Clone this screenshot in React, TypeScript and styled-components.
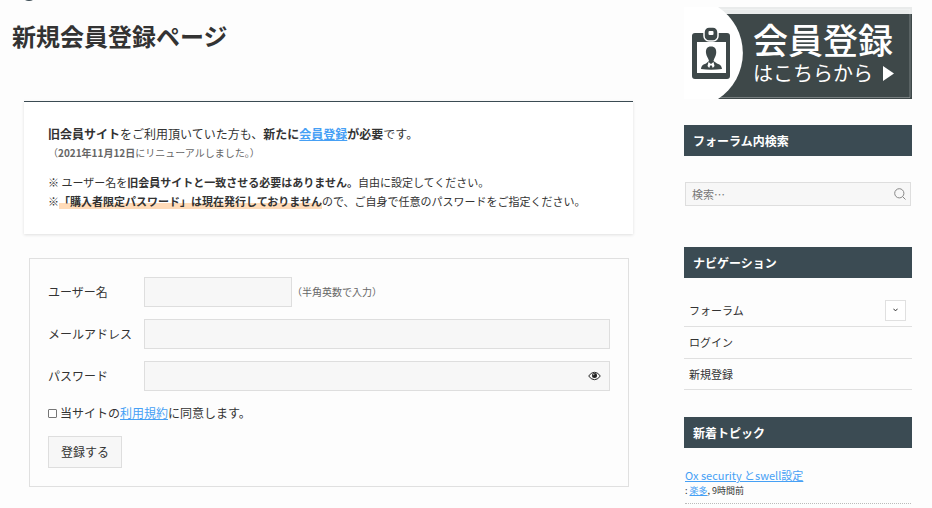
import React from "react";
import styled, { createGlobalStyle } from "styled-components";

const GlobalStyle = createGlobalStyle`
  *, *::before, *::after { box-sizing: border-box; }
  body {
    margin: 0;
    background: #fdfdfd;
    color: #333;
    font-family: "Noto Sans CJK JP", "Noto Sans", sans-serif;
    font-size: 12px;
    line-height: 20px;
  }
  a { color: #46a0f5; }
  button, input { font: inherit; color: inherit; }
`;

const Page = styled.div`
  display: flex;
  align-items: flex-start;
  gap: 39px;
  padding: 0 20px 0 12px;
`;

const Main = styled.main`
  flex: 1;
  min-width: 0;
`;

const HeaderMark = styled.svg`
  display: block;
  margin-left: 9px;
`;

const PageTitle = styled.h1`
  margin: 17px 0 0;
  font-size: 24px;
  line-height: 34px;
  font-weight: 700;
`;

const Notice = styled.section`
  margin: 48px 12px 0;
  padding: 22px 24px 23px;
  background: #fff;
  border-top: 1px solid #3b4b53;
  box-shadow: 0 1px 3px rgba(0, 0, 0, 0.12);
`;

const Lead = styled.p`
  margin: 0;
`;

const Renewal = styled.p`
  margin: 0 0 12px;
  font-size: 10px;
  line-height: 17px;
  color: #666;
`;

const Note = styled.p`
  margin: 0;
  font-size: 11px;
  line-height: 19px;
`;

const Marker = styled.strong`
  background: linear-gradient(transparent 64%, #ffdbb8 64%);
`;

const Form = styled.form`
  display: flex;
  flex-direction: column;
  gap: 12px;
  margin: 24px 16px 20px 17px;
  padding: 18px;
  border: 1px solid #e0e0e0;
`;

const Field = styled.div`
  display: grid;
  grid-template-columns: 96px 1fr;
  align-items: center;
`;

const Control = styled.div`
  position: relative;
  display: flex;
  align-items: center;
`;

const TextInput = styled.input<{ $short?: boolean }>`
  width: ${(p) => (p.$short ? "148px" : "100%")};
  height: 30px;
  padding: 0 8px;
  background: #f7f7f7;
  border: 1px solid #dedede;
  border-radius: 0;
`;

const Hint = styled.small`
  font-size: 10px;
  color: #666;
`;

const EyeButton = styled.button`
  position: absolute;
  right: 9px;
  display: flex;
  padding: 0;
  border: 0;
  background: none;
`;

const Agreement = styled.label`
  display: flex;
  align-items: center;
`;

const CheckBox = styled.input`
  appearance: none;
  width: 9px;
  height: 9px;
  margin: 0 3px 0 0;
  background: #fff;
  border: 1px solid #767676;
  border-radius: 1px;
  &:checked { background: #46a0f5; }
`;

const SubmitButton = styled.button`
  align-self: flex-start;
  margin-top: 1px;
  height: 32px;
  padding: 0 12px;
  background: #f7f7f7;
  border: 1px solid #dedede;
`;

const Sidebar = styled.aside`
  flex: 0 0 228px;
  padding-top: 7px;
`;

const BannerLink = styled.a`
  display: block;
  margin-bottom: 26px;
  svg { display: block; }
`;

const WidgetTitle = styled.h2`
  margin: 0;
  padding: 6px 9px 5px;
  background: #3b4b53;
  color: #fff;
  font-size: 12px;
  line-height: 20px;
  font-weight: 700;
`;

const SearchForm = styled.form`
  display: flex;
  margin: 26px 1px 41px;
  height: 24px;
  background: #f7f7f7;
  border: 1px solid #dedede;
`;

const SearchInput = styled.input`
  flex: 1;
  min-width: 0;
  padding: 0 6px;
  border: 0;
  background: none;
  font-size: 11px;
  &::placeholder { color: #777; }
`;

const SearchButton = styled.button`
  display: flex;
  align-items: center;
  padding: 0 4px;
  border: 0;
  background: none;
`;

const NavList = styled.ul`
  margin: 17px 0 27px;
  padding: 0;
  list-style: none;
`;

const NavItem = styled.li`
  display: flex;
  align-items: center;
  justify-content: space-between;
  height: 32px;
  padding: 0 6px 1px 5px;
  border-bottom: 1px solid #e0e0e0;
  font-size: 11px;
  &:last-child { height: 31px; }
`;

const NavLink = styled.a`
  color: #333;
  text-decoration: none;
`;

const ToggleButton = styled.button`
  display: flex;
  align-items: center;
  justify-content: center;
  width: 21px;
  height: 21px;
  padding: 0;
  background: #fff;
  border: 1px solid #e0e0e0;
`;

const TopicList = styled.ul`
  margin: 19px 1px 0;
  padding: 0;
  list-style: none;
`;

const Topic = styled.li`
  padding-bottom: 5px;
  border-bottom: 1px dotted #bbb;
  font-size: 11px;
  line-height: 16px;
`;

const TopicMeta = styled.div`
  font-size: 9px;
  line-height: 15px;
`;

const Banner = () => (
  <svg width="228" height="92" viewBox="0 0 228 92" role="img" aria-label="会員登録はこちらから">
    <defs>
      <clipPath id="banner-bounds">
        <rect width="228" height="92" />
      </clipPath>
    </defs>
    <g clipPath="url(#banner-bounds)">
      <rect y="7" width="228" height="85" fill="#fff" />
      <path d="M34 0H228V7H34Z" fill="#e9ebeb" />
      <path d="M34 7H228V92H34Z" fill="#3e4849" />
      <path d="M34 2.5H226V90.5H34" fill="none" stroke="#fff" strokeOpacity="0.3" />
      <path d="M0 0H34A55 55 0 0 1 34 92H0Z" fill="#fff" />
      <g fill="#3e4849">
        <path d="M11 26H43Q46 26 46 29V69Q46 72 43 72H11Q8 72 8 69V29Q8 26 11 26ZM13 35V66H42V35Z" fillRule="evenodd" />
        <rect x="20" y="20" width="14" height="14" rx="5" stroke="#fff" strokeWidth="1.500" />
        <rect x="24.500" y="24" width="5" height="4" rx="1" fill="#fff" />
        <path d="M27 39.500C31 39.500 32.500 42 32.200 46C32 49.500 30 51 29.500 54L33 56.500C36 57.500 37.500 58.500 38 62Q27 63.500 17 62C17.500 58.500 19 57.500 22 56.500L25 54C24.500 51 22.300 49.500 22 46C21.700 42 23 39.500 27 39.500Z" />
        <path d="M24.500 55L27 57L29.500 55L30.500 59L28.800 61L27.800 58.500H26.200L25.200 61L23.500 59Z" fill="#fff" />
      </g>
      <text x="69" y="47" fontSize="35" fontWeight="500" fill="#fff">会員登録</text>
      <text x="69" y="74" fontSize="20" fontWeight="400" fill="#fff">はこちらから</text>
      <path d="M199 59L210 66.500L199 74Z" fill="#fff" />
    </g>
  </svg>
);

const EyeIcon = () => (
  <svg width="13" height="10" viewBox="0 0 13 10">
    <path d="M.7 5Q3 1.300 6.500 1.300T12.300 5Q10 8.700 6.500 8.700T.7 5Z" fill="none" stroke="#222" />
    <circle cx="6.500" cy="4.500" r="2.500" fill="#222" />
    <path d="M5.200 4.300Q5.200 3.200 6.500 3.200" fill="none" stroke="#fff" strokeWidth=".7" />
  </svg>
);

const SearchIcon = () => (
  <svg width="12" height="12" viewBox="0 0 12 12" fill="none" stroke="#888">
    <circle cx="5.300" cy="5.300" r="4.600" />
    <path d="M8.600 8.600L11.500 11.500" />
  </svg>
);

const ChevronIcon = () => (
  <svg width="5" height="4" viewBox="0 0 5 4" fill="none" stroke="#333">
    <path d="M.4 .7L2.500 2.900L4.600 .7" />
  </svg>
);

export default function App() {
  return (
    <>
      <GlobalStyle />
      <Page>
        <Main>
          <HeaderMark width="16" height="2" viewBox="0 0 16 2" aria-hidden="true">
            <circle cx="8" cy="-7" r="8" fill="#3b4b53" />
          </HeaderMark>
          <PageTitle>新規会員登録ページ</PageTitle>
          <Notice>
            <Lead>
              <strong>旧会員サイト</strong>をご利用頂いていた方も、
              <strong>新たに<a href="#register">会員登録</a>が必要</strong>です。
            </Lead>
            <Renewal>（<strong>2021年11月12日</strong>にリニューアルしました。）</Renewal>
            <Note>
              ※ ユーザー名を<strong>旧会員サイトと一致させる必要はありません。</strong>自由に設定してください。
            </Note>
            <Note>
              ※<Marker>「購入者限定パスワード」は現在発行しておりません</Marker>ので、ご自身で任意のパスワードをご指定ください。
            </Note>
          </Notice>
          <Form id="register" onSubmit={(e) => e.preventDefault()}>
            <Field>
              <label htmlFor="username">ユーザー名</label>
              <Control>
                <TextInput id="username" type="text" $short />
                <Hint>（半角英数で入力）</Hint>
              </Control>
            </Field>
            <Field>
              <label htmlFor="email">メールアドレス</label>
              <Control>
                <TextInput id="email" type="email" />
              </Control>
            </Field>
            <Field>
              <label htmlFor="password">パスワード</label>
              <Control>
                <TextInput id="password" type="password" />
                <EyeButton type="button" aria-label="パスワードを表示">
                  <EyeIcon />
                </EyeButton>
              </Control>
            </Field>
            <Agreement>
              <CheckBox type="checkbox" />
              <span>当サイトの<a href="#terms">利用規約</a>に同意します。</span>
            </Agreement>
            <SubmitButton type="submit">登録する</SubmitButton>
          </Form>
        </Main>
        <Sidebar>
          <BannerLink href="#register">
            <Banner />
          </BannerLink>
          <WidgetTitle>フォーラム内検索</WidgetTitle>
          <SearchForm role="search" onSubmit={(e) => e.preventDefault()}>
            <SearchInput type="text" placeholder="検索…" aria-label="検索" />
            <SearchButton type="submit" aria-label="検索">
              <SearchIcon />
            </SearchButton>
          </SearchForm>
          <WidgetTitle>ナビゲーション</WidgetTitle>
          <NavList>
            <NavItem>
              <NavLink href="#forum">フォーラム</NavLink>
              <ToggleButton type="button" aria-label="サブメニューを開く">
                <ChevronIcon />
              </ToggleButton>
            </NavItem>
            <NavItem>
              <NavLink href="#login">ログイン</NavLink>
            </NavItem>
            <NavItem>
              <NavLink href="#register">新規登録</NavLink>
            </NavItem>
          </NavList>
          <WidgetTitle>新着トピック</WidgetTitle>
          <TopicList>
            <Topic>
              <a href="#topic">Ox security とswell設定</a>
              <TopicMeta>
                : <a href="#user">楽多</a>, 9時間前
              </TopicMeta>
            </Topic>
          </TopicList>
        </Sidebar>
      </Page>
    </>
  );
}
